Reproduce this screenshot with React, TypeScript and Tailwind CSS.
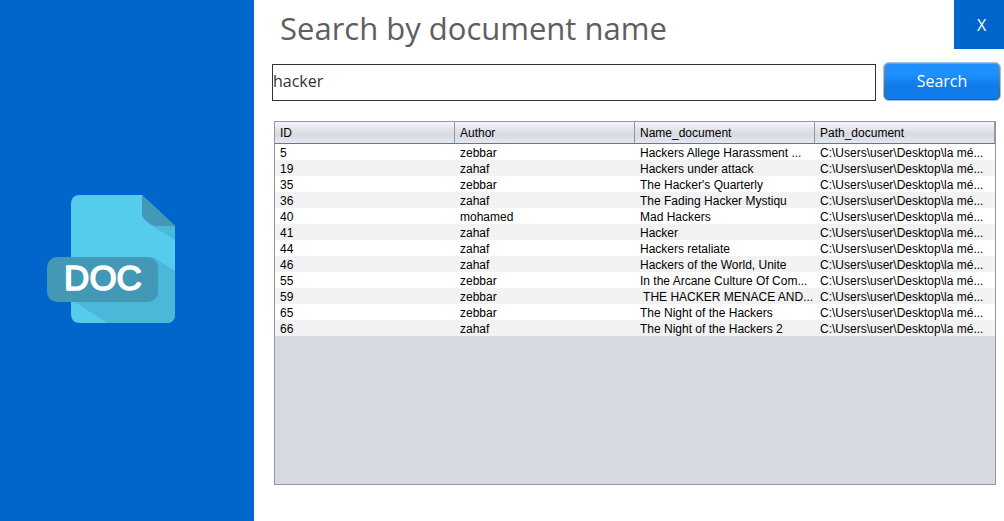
type DocumentRow = { id: number; author: string; name: string };

const PATH = "C:\\Users\\user\\Desktop\\la mé...";

const columns = ["ID", "Author", "Name_document", "Path_document"];

const rows: DocumentRow[] = [
  { id: 5, author: "zebbar", name: "Hackers Allege Harassment ..." },
  { id: 19, author: "zahaf", name: "Hackers under attack" },
  { id: 35, author: "zebbar", name: "The Hacker's Quarterly" },
  { id: 36, author: "zahaf", name: "The Fading Hacker Mystiqu" },
  { id: 40, author: "mohamed", name: "Mad Hackers" },
  { id: 41, author: "zahaf", name: "Hacker" },
  { id: 44, author: "zahaf", name: "Hackers retaliate" },
  { id: 46, author: "zahaf", name: "Hackers of the World, Unite" },
  { id: 55, author: "zebbar", name: "In the Arcane Culture Of Com..." },
  { id: 59, author: "zebbar", name: " THE HACKER MENACE AND..." },
  { id: 65, author: "zebbar", name: "The Night of the Hackers" },
  { id: 66, author: "zahaf", name: "The Night of the Hackers 2" },
];

function DocIcon() {
  return (
    <svg width="128" height="128" viewBox="0 0 128 128" role="img" aria-label="DOC file">
      <path d="M33 0H95L128 31V119Q128 128 119 128H33Q24 128 24 119V9Q24 0 33 0Z" fill="#55cbee" />
      <path d="M102 29L128 45V31H106Z" fill="#4bb8da" />
      <path d="M106 62L128 76V119Q128 128 119 128H60L28 107V100Z" fill="#4bb8da" />
      <path d="M95 0L128 31H108C103 30 95 24 95 19Z" fill="#4298b5" />
      <rect x="0" y="62" width="111" height="45" rx="10" fill="#4298b5" />
      <text
        x="56"
        y="95"
        textAnchor="middle"
        fill="#ffffff"
        stroke="#ffffff"
        strokeWidth="1.6"
        strokeLinejoin="round"
        className="font-['Liberation_Sans',Arial,sans-serif] text-[35px]"
      >
        DOC
      </text>
    </svg>
  );
}

export default function App() {
  return (
    <div className="flex min-h-screen bg-white font-['Open_Sans',sans-serif]">
      <aside className="flex w-[254px] shrink-0 items-center justify-center bg-[#0066cc] pr-8 pb-1">
        <DocIcon />
      </aside>

      <main className="flex min-w-0 flex-1 flex-col">
        <header className="flex h-[49px] items-start justify-between pl-[26px]">
          <h1 className="pt-2 text-[31px] leading-10 font-normal text-[#5e5e5e]">
            Search by document name
          </h1>
          <button
            type="button"
            aria-label="Close"
            className="h-[49px] w-[50px] shrink-0 bg-[#0066cc] pl-[5px] text-base text-white"
          >
            X
          </button>
        </header>

        <form
          className="mt-3 flex items-end gap-[7px] pr-[3px] pl-[18px]"
          onSubmit={(e) => e.preventDefault()}
        >
          <input
            type="text"
            aria-label="Document name"
            defaultValue="hacker"
            className="mt-[3px] h-[37px] min-w-0 flex-1 border border-[#333333] bg-white pb-[3px] text-base text-[#333333] outline-none"
          />
          <button
            type="submit"
            className="h-[39px] w-[118px] shrink-0 rounded-md border border-[#9cc4e6] bg-[#666666] bg-linear-to-b from-[#999999] to-[#555555] p-px text-base text-white"
          >
            <span className="flex h-full items-center justify-center rounded bg-linear-to-b from-[#1e90ff] from-30% to-[#0f7cea] to-60% pb-[2px]">
              Search
            </span>
          </button>
        </form>

        <section className="mt-5 mr-2 mb-9 ml-5 flex-1 border border-[#9297a1] bg-[#d6d9e0] font-['Liberation_Sans',Arial,sans-serif] text-xs text-black">
          <table className="w-full table-fixed border-separate border-spacing-0">
            <thead>
              <tr>
                {columns.map((column) => (
                  <th
                    key={column}
                    scope="col"
                    className="h-[22px] border-r border-b border-r-[#9297a1] border-b-[#6f7580] bg-linear-to-b from-[#f4f5f8] via-[#d8dae0] via-60% to-[#e4e8f2] p-0 pl-[5px] text-left font-normal"
                  >
                    {column}
                  </th>
                ))}
              </tr>
            </thead>
            <tbody>
              {rows.map((row) => (
                <tr key={row.id} className="bg-white even:bg-[#f2f2f2]">
                  {[String(row.id), row.author, row.name, PATH].map((cell, i) => (
                    <td
                      key={columns[i]}
                      className="h-4 overflow-hidden p-0 pt-[2px] pl-[5px] leading-[14px] whitespace-pre"
                    >
                      {cell}
                    </td>
                  ))}
                </tr>
              ))}
            </tbody>
          </table>
        </section>
      </main>
    </div>
  );
}
